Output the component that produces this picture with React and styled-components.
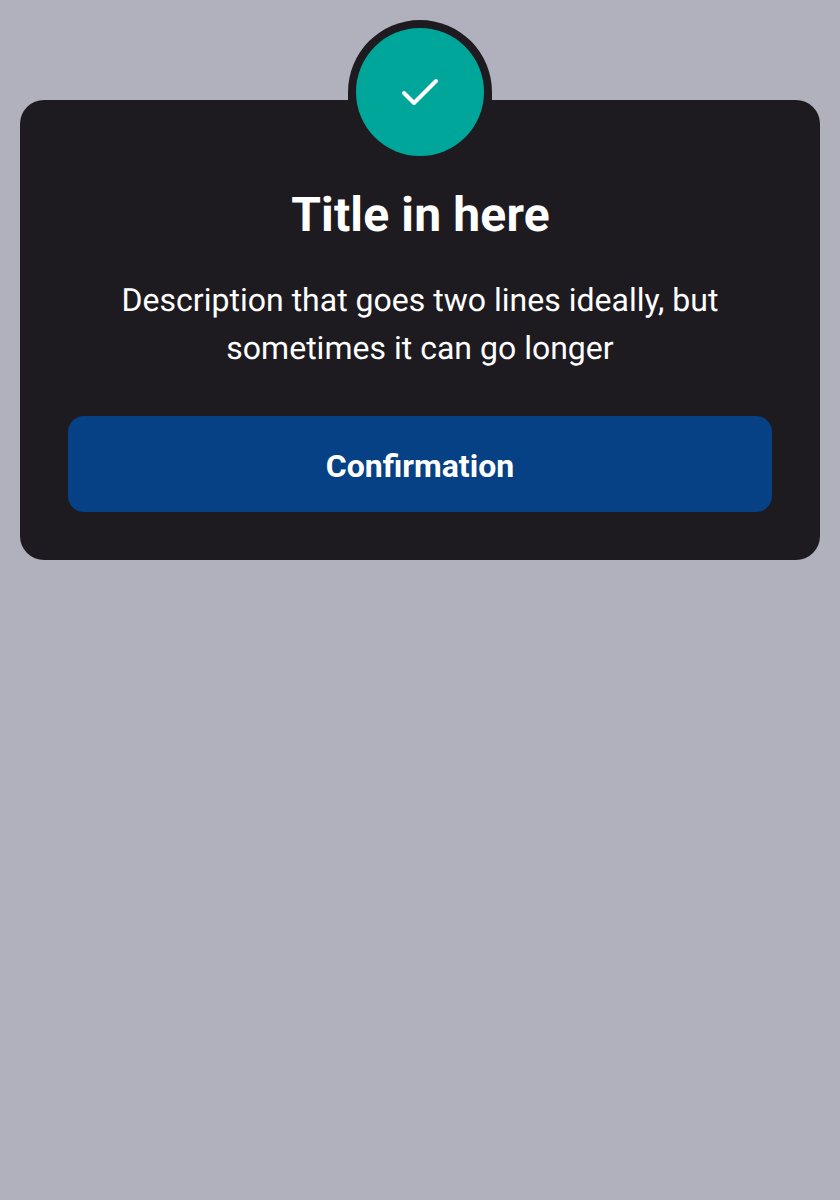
import React from "react";
import styled, { createGlobalStyle } from "styled-components";

const GlobalStyle = createGlobalStyle`
  *, *::before, *::after { box-sizing: border-box; }
  body {
    margin: 0;
    background: #b1b1bd;
    font-family: Roboto, "Liberation Sans", sans-serif;
    text-rendering: geometricPrecision;
  }
`;

const Page = styled.main`
  min-height: 1200px;
  padding: 20px;
`;

const Dialog = styled.section`
  display: flex;
  flex-direction: column;
  align-items: center;
  margin-top: 80px;
  height: 460px;
  padding: 0 48px 48px;
  border-radius: 24px;
  background: #1e1b20;
  color: #fff;
  text-align: center;
`;

const BadgeFrame = styled.div`
  flex: none;
  margin-top: -80px;
  padding: 8px;
  border-radius: 72px 72px 0 0;
  background: #1e1b20;
`;

const Badge = styled.div`
  display: flex;
  align-items: center;
  justify-content: center;
  width: 128px;
  height: 128px;
  border-radius: 50%;
  background: #00a699;
`;

const Title = styled.h1`
  margin: 15px 0 0;
  padding-left: 1px;
  font-size: 48px;
  line-height: 72px;
  font-weight: 700;
  letter-spacing: 0.15px;
`;

const Description = styled.p`
  width: 640px;
  margin: 25px 0 0;
  font-size: 32px;
  line-height: 48px;
  letter-spacing: 0.01px;
`;

const ConfirmButton = styled.button`
  width: 100%;
  height: 96px;
  margin-top: auto;
  padding: 4px 0 0;
  border: 0;
  border-radius: 16px;
  background: #064185;
  color: #fff;
  font: 700 32px/48px Roboto, "Liberation Sans", sans-serif;
`;

export default function App() {
  return (
    <>
      <GlobalStyle />
      <Page>
        <Dialog>
          <BadgeFrame>
            <Badge>
              <svg width="48" height="48" viewBox="0 0 48 48" fill="none" stroke="#fff" strokeWidth="4" strokeLinecap="round" strokeLinejoin="round">
                <path d="M40 13 L18 35 L8 25" />
              </svg>
            </Badge>
          </BadgeFrame>
          <Title>Title in here</Title>
          <Description>Description that goes two lines ideally, but sometimes it can go longer</Description>
          <ConfirmButton type="button">Confirmation</ConfirmButton>
        </Dialog>
      </Page>
    </>
  );
}
